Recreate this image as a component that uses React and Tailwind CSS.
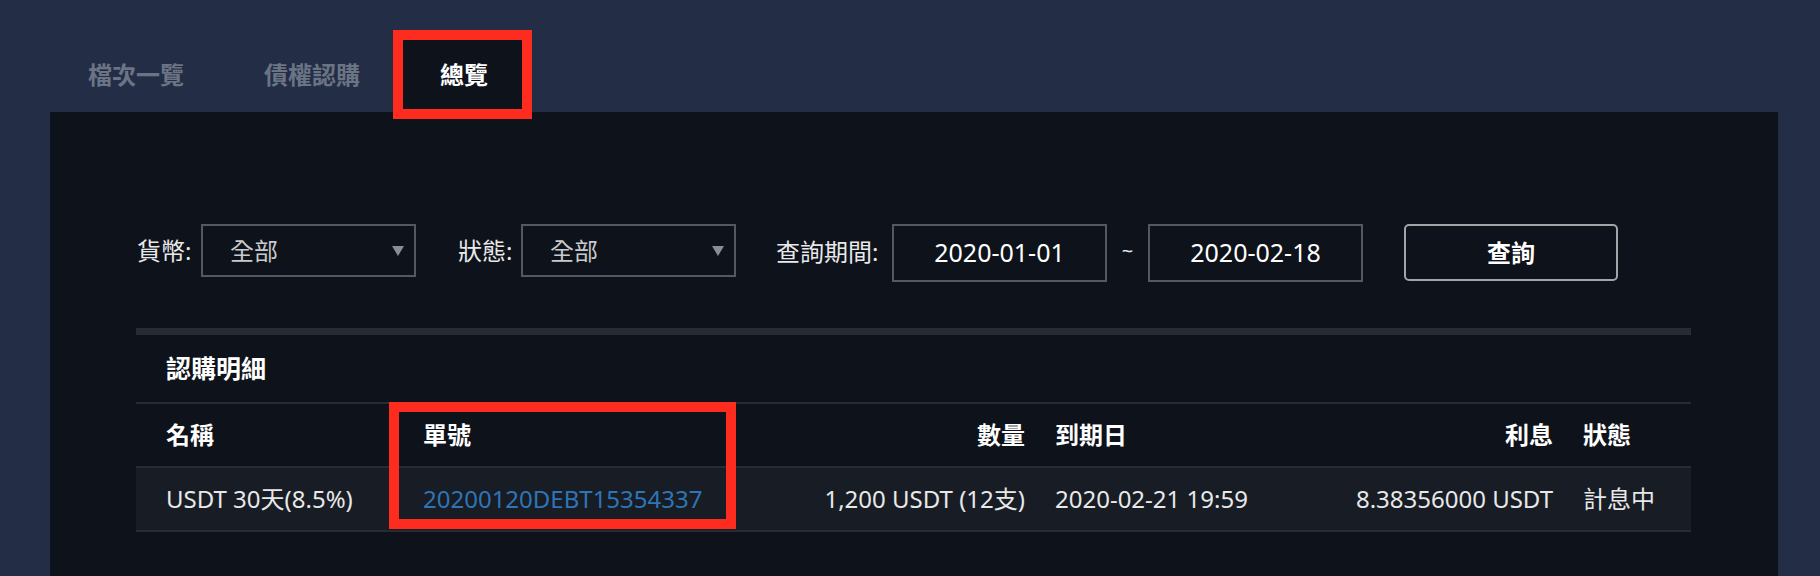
const font = "font-['Noto_Sans','Noto_Sans_CJK_TC',sans-serif]";

function Caret() {
  return (
    <svg width="12" height="10" viewBox="0 0 12 10" className="shrink-0">
      <polygon points="0,0 12,0 6,10" fill="#8a8d93" />
    </svg>
  );
}

function Select({ value }) {
  return (
    <div className="flex h-[53px] w-[215px] items-center justify-between border-2 border-[#55585f] pl-[27px] pr-[10px] text-[24px] text-[#c9cacc]">
      <span>{value}</span>
      <Caret />
    </div>
  );
}

function DateBox({ value }) {
  return (
    <div className="flex h-[58px] w-[215px] items-center justify-center border-2 border-[#55585f] text-[25px] text-white">
      {value}
    </div>
  );
}

const cols = 'grid grid-cols-[227px_330px_242px_245px_223px_1fr] gap-x-[30px] px-[30px]';

export default function App() {
  const [tab] = ['總覽'];

  return (
    <div className={`relative flex h-[576px] flex-col overflow-hidden bg-[#232e46] pl-[50px] pr-[42px] pt-[35px] ${font}`}>
      {/* Tabs */}
      <div className="-ml-[2px] flex h-[77px] items-stretch text-[24px] font-bold">
        {['檔次一覽', '債權認購', '總覽'].map((t) => (
          <div
            key={t}
            className={
              t === tab
                ? 'flex items-center bg-[#0e121a] px-[40px] pt-[2px] text-white'
                : 'flex items-center px-[40px] pt-[2px] text-[#6b7485]'
            }
          >
            {t}
          </div>
        ))}
      </div>

      {/* Panel */}
      <div className="flex-1 bg-[#0e121a] pl-[86px] pr-[87px] pt-[112px]">
        {/* Filters */}
        <div className="flex items-start text-[24px] text-[#e9e9ea]">
          <span className="w-[65px] pl-[1px] leading-[53px]">貨幣:</span>
          <Select value="全部" />
          <span className="ml-[42px] w-[63px] leading-[53px]">狀態:</span>
          <Select value="全部" />
          <span className="ml-[40px] w-[116px] leading-[56px]">查詢期間:</span>
          <DateBox value="2020-01-01" />
          <span className="w-[41px] text-center text-[20px] leading-[54px]">~</span>
          <DateBox value="2020-02-18" />
          <button className="ml-[41px] h-[57px] w-[214px] rounded-[5px] border-2 border-[#a3a4a7] text-[24px] font-bold text-white">
            查詢
          </button>
        </div>

        {/* Table */}
        <div className="mt-[46px] border-t-[7px] border-[#272b33]">
          <div className="flex h-[69px] items-center border-b-2 border-[#272b33] px-[30px] text-[25px] font-bold text-white">
            認購明細
          </div>
          <div className={`${cols} h-[64px] items-center border-b-2 border-[#272b33] text-[24px] font-bold text-white`}>
            <span>名稱</span>
            <span>單號</span>
            <span className="text-right">數量</span>
            <span>到期日</span>
            <span className="text-right">利息</span>
            <span>狀態</span>
          </div>
          <div className={`${cols} h-[64px] items-center whitespace-nowrap border-b-2 border-[#272b33] bg-[#181c24] text-[24px] text-[#e8e8e9]`}>
            <span>USDT 30天(8.5%)</span>
            <a className="text-[#2e75b6]">20200120DEBT15354337</a>
            <span className="text-right">1,200 USDT (12支)</span>
            <span>2020-02-21 19:59</span>
            <span className="text-right">8.38356000 USDT</span>
            <span>計息中</span>
          </div>
        </div>
      </div>

      {/* Annotation boxes */}
      <div className="absolute left-[393px] top-[30px] h-[89px] w-[139px] border-[10px] border-[#fe2b1f]" />
      <div className="absolute left-[389px] top-[402px] h-[127px] w-[347px] border-[10px] border-[#fe2b1f]" />
    </div>
  );
}
